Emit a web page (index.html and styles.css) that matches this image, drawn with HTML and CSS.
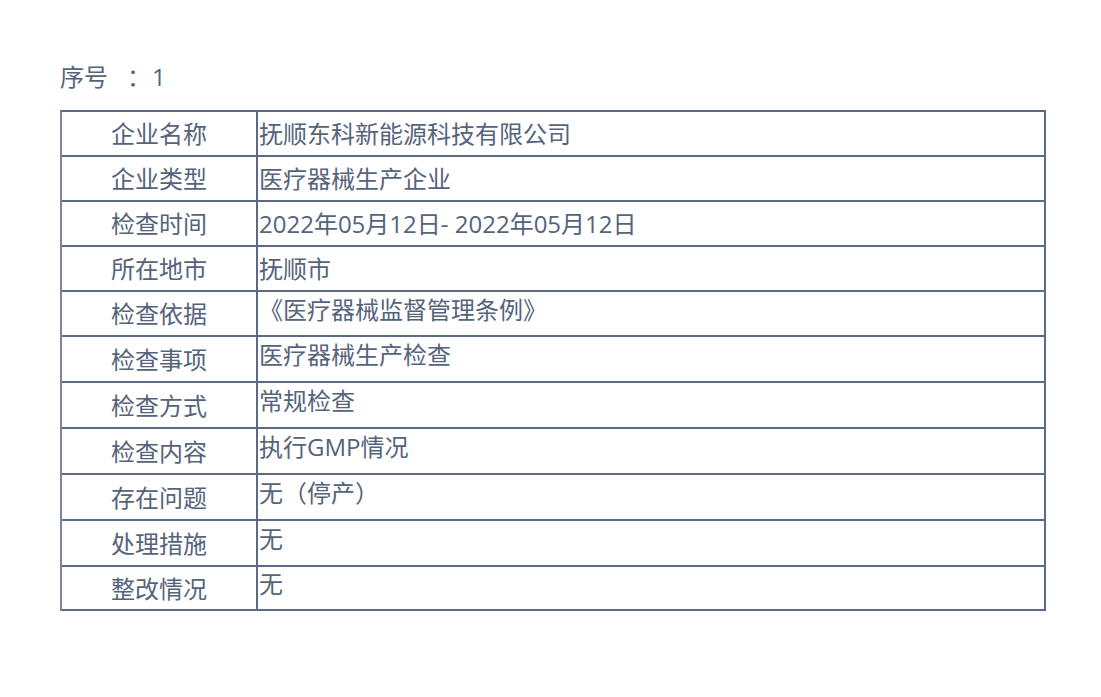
FILE: index.html
```html
<!DOCTYPE html>
<html lang="zh-CN">
<head>
<meta charset="utf-8">
<title>序号 1</title>
<link rel="stylesheet" href="styles.css">
</head>
<body>
<div class="page">
  <div class="title">序号<span class="colon">：</span><span class="num">1</span></div>
  <div class="sheet">
    <div class="label r45">企业名称</div><div class="value r45">抚顺东科新能源科技有限公司</div>
    <div class="label r45">企业类型</div><div class="value r45">医疗器械生产企业</div>
    <div class="label r45">检查时间</div><div class="value r45">2022年05月12日- 2022年05月12日</div>
    <div class="label r45">所在地市</div><div class="value r45">抚顺市</div>
    <div class="label r45">检查依据</div><div class="value r45 up">《医疗器械监督管理条例》</div>
    <div class="label r46">检查事项</div><div class="value r46 up">医疗器械生产检查</div>
    <div class="label r46">检查方式</div><div class="value r46 up">常规检查</div>
    <div class="label r46">检查内容</div><div class="value r46 up">执行GMP情况</div>
    <div class="label r46">存在问题</div><div class="value r46 up">无（停产）</div>
    <div class="label r46">处理措施</div><div class="value r46 up">无</div>
    <div class="label r44">整改情况</div><div class="value r44 up">无</div>
  </div>
</div>
</body>
</html>
```
FILE: styles.css
```css
html, body {
  margin: 0;
  padding: 0;
  background: #ffffff;
}

body {
  font-family: "Open Sans", "Noto Sans CJK SC", sans-serif;
  color: #55637b;
  font-size: 24px;
}

.page {
  padding: 64px 0 0 60px;
}

.title {
  height: 26px;
  line-height: 26px;
  margin-bottom: 20px;
  white-space: nowrap;
}

.title .colon {
  margin-left: 19px;
}

.title .num {
  margin-left: 1px;
}

.sheet {
  width: 986px;
  box-sizing: border-box;
  display: grid;
  grid-template-columns: 196px 1fr;
  border-top: 2px solid #5b6a85;
  border-left: 2px solid #7a879d;
}

.label,
.value {
  box-sizing: border-box;
  border-right: 2px solid #5b6a85;
  border-bottom: 2px solid #5b6a85;
  display: flex;
  align-items: center;
  line-height: 28px;
  white-space: nowrap;
}

.label {
  justify-content: center;
  padding-top: 1px;
}

.value {
  padding-left: 1px;
}

.value.up {
  padding-bottom: 8px;
}

.r45 { height: 45px; }
.r46 { height: 46px; }
.r44 { height: 44px; }
```
